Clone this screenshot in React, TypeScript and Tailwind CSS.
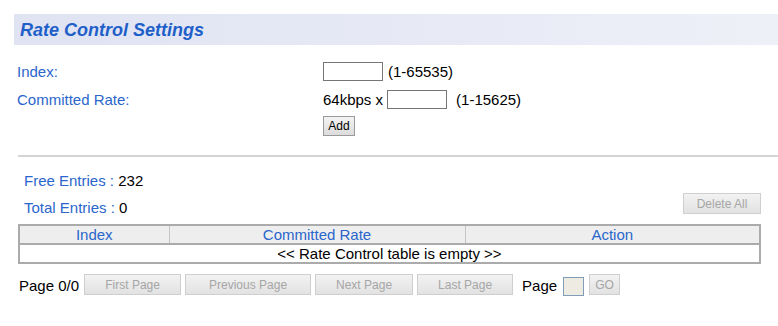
const font = { fontFamily: '"Liberation Sans", Arial, sans-serif' };

function DisabledButton({ label, className = "" }: { label: string; className?: string }) {
  return (
    <button
      disabled
      className={`h-[21px] border border-[#cfcfcf] bg-gradient-to-b from-[#f2f2f2] to-[#e2e2e2] text-[12px] leading-none text-[#a6a6a6] ${className}`}
    >
      {label}
    </button>
  );
}

export default function App() {
  return (
    <div className="w-[778px] h-[326px] overflow-hidden bg-white text-[15px] leading-[18px] text-black" style={font}>
      {/* title band */}
      <div className="mt-[14px] ml-[14px] h-[31px] flex items-center pl-[6px] bg-gradient-to-r from-[#dfe3f2] to-[#eef0f8]">
        <h1 className="text-[18px] font-bold italic text-[#1f5fc9]">Rate Control Settings</h1>
      </div>

      {/* form */}
      <div className="ml-[17px] mt-[17px] grid grid-cols-[306px_1fr] items-center">
        <div className="h-[19px] leading-[19px] text-[#2a66cc]">Index:</div>
        <div className="h-[19px] flex items-center gap-[5px]">
          <input className="w-[60px] h-[19px] border border-[#767676] outline-none" />
          <span>(1-65535)</span>
        </div>
        <div className="mt-[9px] h-[19px] leading-[19px] text-[#2a66cc]">Committed Rate:</div>
        <div className="mt-[9px] h-[19px] flex items-center">
          <span>64kbps x</span>
          <input className="ml-[4px] w-[60px] h-[19px] border border-[#767676] outline-none" />
          <span className="ml-[9px]">(1-15625)</span>
        </div>
        <div />
        <div className="mt-[7px]">
          <button className="block h-[20px] w-[32px] border border-[#9a9a9a] bg-gradient-to-b from-[#f3f3f3] to-[#dcdcdc] text-[12px] leading-none">
            Add
          </button>
        </div>
      </div>

      <div className="ml-[18px] mt-[19px] h-[2px] bg-[#d4d4d4]" />

      {/* entries */}
      <div className="ml-[24px] mt-[15px] flex items-center h-[18px]">
        <span className="text-[#2a66cc]">Free Entries :&nbsp;</span>
        <span>232</span>
      </div>
      <div className="ml-[24px] mr-[17px] mt-[3px] flex items-start justify-between h-[21px]">
        <div className="flex items-center mt-[6px] h-[18px]">
          <span className="text-[#2a66cc]">Total Entries :&nbsp;</span>
          <span>0</span>
        </div>
        <DisabledButton label="Delete All" className="w-[78px]" />
      </div>

      {/* table */}
      <table className="ml-[18px] mt-[10px] w-[743px] border-collapse border-2 border-[#ababab] table-fixed">
        <thead>
          <tr className="h-[19px] bg-[#eeeeee]">
            <th className="w-[150px] p-0 border-r border-[#c4c4c4] border-b-2 border-b-[#ababab] font-normal text-[#2a66cc] leading-[17px]">Index</th>
            <th className="w-[296px] p-0 border-r border-[#c4c4c4] border-b-2 border-b-[#ababab] font-normal text-[#2a66cc] leading-[17px]">Committed Rate</th>
            <th className="p-0 border-b-2 border-b-[#ababab] font-normal text-[#2a66cc] leading-[17px]">Action</th>
          </tr>
        </thead>
        <tbody>
          <tr className="h-[18px]">
            <td colSpan={3} className="p-0 text-center leading-[17px]">
              &lt;&lt; Rate Control table is empty &gt;&gt;
            </td>
          </tr>
        </tbody>
      </table>

      {/* pager */}
      <div className="ml-[19px] mt-[10px] flex items-center h-[21px]">
        <span className="mr-[1px] mt-[3px]">Page 0/0</span>
        <DisabledButton label="First Page" className="ml-[4px] w-[97px]" />
        <DisabledButton label="Previous Page" className="ml-[4px] w-[126px]" />
        <DisabledButton label="Next Page" className="ml-[4px] w-[98px]" />
        <DisabledButton label="Last Page" className="ml-[4px] w-[96px]" />
        <span className="ml-[9px] mt-[3px]">Page</span>
        <input className="ml-[6px] mt-[3px] w-[21px] h-[19px] border border-[#7f9db9] bg-[#eeebe3] outline-none" disabled />
        <DisabledButton label="GO" className="ml-[5px] w-[31px]" />
      </div>
    </div>
  );
}
